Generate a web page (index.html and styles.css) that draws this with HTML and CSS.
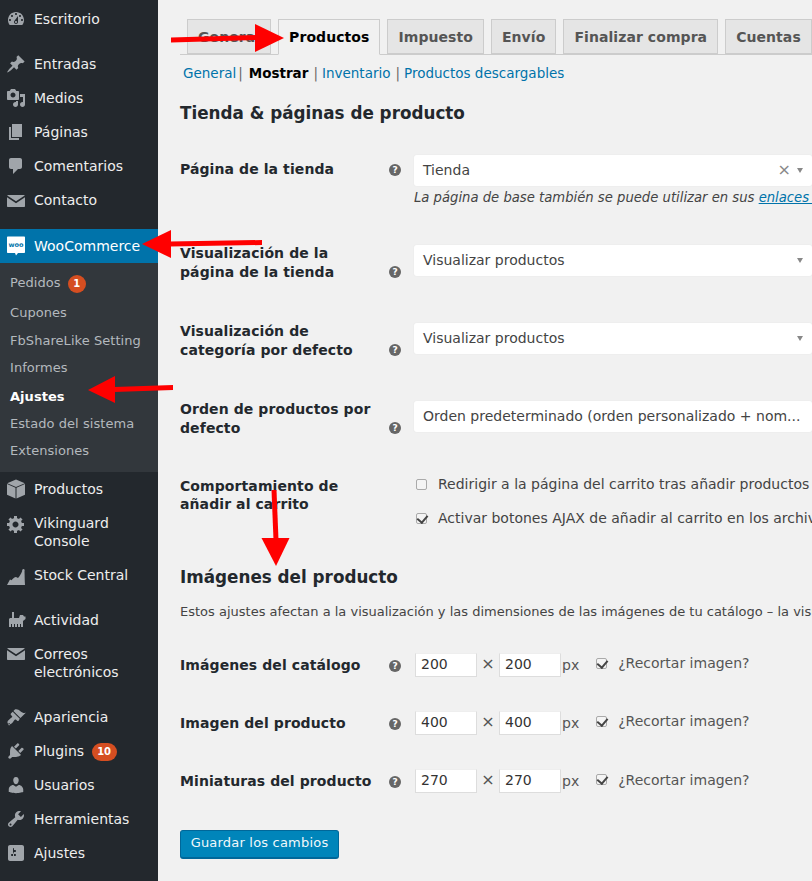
FILE: index.html
```html
<!DOCTYPE html>
<html lang="es">
<head>
<meta charset="utf-8">
<title>Ajustes de WooCommerce</title>
<link rel="stylesheet" href="styles.css">
</head>
<body>
<div class="page">
  <aside class="sidebar">
    <a class="item first"><svg class="ico" viewBox="0 0 20 20"><path d="M3.76 16h12.48c1.1-1.37 1.76-3.11 1.76-5 0-4.42-3.58-8-8-8s-8 3.58-8 8c0 1.89.66 3.63 1.76 5zM10 4c.55 0 1 .45 1 1s-.45 1-1 1-1-.45-1-1 .45-1 1-1zM6 6c.55 0 1 .45 1 1s-.45 1-1 1-1-.45-1-1 .45-1 1-1zm8 0c.55 0 1 .45 1 1s-.45 1-1 1-1-.45-1-1 .45-1 1-1zm-5.37 5.55L12 7v6c0 1.1-.9 2-2 2s-2-.9-2-2c0-.57.24-1.08.63-1.45zM4 10c.55 0 1 .45 1 1s-.45 1-1 1-1-.45-1-1 .45-1 1-1zm12 0c.55 0 1 .45 1 1s-.45 1-1 1-1-.45-1-1 .45-1 1-1zm-5 3c0-.55-.45-1-1-1s-1 .45-1 1 .45 1 1 1 1-.45 1-1z"/></svg><span>Escritorio</span></a>
    <div class="sep"></div>
    <a class="item"><svg class="ico" viewBox="0 0 20 20"><path d="M10.44 3.02l1.82-1.82 6.36 6.35-1.83 1.82c-1.05-.68-2.48-.57-3.41.36l-.75.75c-.92.93-1.04 2.35-.35 3.41l-1.83 1.82-2.41-2.41-2.8 2.79c-.42.42-3.38 2.71-3.8 2.29s1.86-3.39 2.28-3.81l2.79-2.79L4.1 9.36l1.83-1.82c1.05.69 2.48.57 3.4-.36l.75-.75c.93-.92 1.05-2.35.36-3.41z"/></svg><span>Entradas</span></a>
    <a class="item"><svg class="ico" viewBox="0 0 20 20"><path d="M13 11V4c0-.55-.45-1-1-1h-1.67L9 1H5L3.67 3H2c-.55 0-1 .45-1 1v7c0 .55.45 1 1 1h10c.55 0 1-.45 1-1zM7 4.5c1.38 0 2.5 1.12 2.5 2.5S8.38 9.5 7 9.5 4.5 8.38 4.5 7 5.62 4.5 7 4.5zM14 6h5v10.5c0 1.38-1.12 2.5-2.5 2.5S14 17.88 14 16.5s1.12-2.5 2.5-2.5c.17 0 .34.02.5.05V9h-3V6zm-4 8.05V13h2v3.5c0 1.38-1.12 2.5-2.5 2.5S7 17.88 7 16.5 8.12 14 9.5 14c.17 0 .34.02.5.05z"/></svg><span>Medios</span></a>
    <a class="item"><svg class="ico" viewBox="0 0 20 20"><path d="M6 15V2h10v13H6zm-1 1h8v2H3V5h2v11z"/></svg><span>Páginas</span></a>
    <a class="item"><svg class="ico" viewBox="0 0 20 20"><path d="M5 2h9c1.1 0 2 .9 2 2v7c0 1.1-.9 2-2 2h-2l-5 5v-5H5c-1.1 0-2-.9-2-2V4c0-1.1.9-2 2-2z"/></svg><span>Comentarios</span></a>
    <a class="item"><svg class="ico" viewBox="0 0 20 20"><path d="M2 5h16c.4 0 .7.2.8.5L10 11.300 1.200 5.500C1.300 5.200 1.600 5 2 5zM1 7.300l9 6 9-6V16c0 .6-.4 1-1 1H2c-.6 0-1-.4-1-1z"/></svg><span>Contacto</span></a>
    <div class="sep short"></div>
    <a class="item woo"><svg class="ico" viewBox="0 0 20 20"><path class="woo-bubble" d="M2 .4h16c.6 0 1 .4 1 1v14.600c0 .6-.4 1-1 1h-6l-2 2.500-1-2.500H2c-.6 0-1-.4-1-1V1.400c0-.6.4-1 1-1z"/><text class="woo-text" x="10" y="10.800" text-anchor="middle">woo</text></svg><span>WooCommerce</span></a>
    <div class="submenu">
      <a class="sub tall">Pedidos <b class="badge">1</b></a>
      <a class="sub">Cupones</a>
      <a class="sub">FbShareLike Setting</a>
      <a class="sub">Informes</a>
      <a class="sub current">Ajustes</a>
      <a class="sub">Estado del sistema</a>
      <a class="sub last">Extensiones</a>
    </div>
    <a class="item"><svg class="ico" viewBox="0 0 20 20"><path d="M10 .5l8.800 3.700L10 8 1.200 4.200zM1 5l8.500 3.800V19.500L1 15.800zM19 5V15.800L10.500 19.500V8.800z"/></svg><span>Productos</span></a>
    <a class="item two"><svg class="ico" viewBox="0 0 20 20"><path d="M18 12h-2.180c-.17.7-.44 1.350-.81 1.930l1.540 1.540-2.100 2.100-1.540-1.540c-.58.36-1.230.63-1.910.79V19H8v-2.180c-.68-.16-1.330-.43-1.910-.79l-1.540 1.540-2.120-2.120 1.540-1.540c-.36-.58-.63-1.230-.79-1.910H1V9.030h2.170c.16-.7.44-1.350.8-1.940L2.430 5.550l2.100-2.100 1.540 1.540c.58-.37 1.240-.64 1.930-.81V2h3v2.180c.68.16 1.330.43 1.910.79l1.540-1.540 2.120 2.120-1.540 1.540c.36.59.64 1.240.8 1.940H18V12zm-8.500 1.500c1.660 0 3-1.340 3-3s-1.340-3-3-3-3 1.340-3 3 1.340 3 3 3z"/></svg><span>Vikinguard<br>Console</span></a>
    <a class="item"><svg class="ico" viewBox="0 0 20 20"><path d="M1 20l3-5.500 1.500.8c1.500-2 3-3.300 4.500-3.300l2 1c1.500-1.500 3-4 4.200-7-.3-1 .3-2 1.300-2s1.500 1 1 2c.2 5 .2 10 .5 14z"/></svg><span>Stock Central</span></a>
    <div class="sep mid"></div>
    <a class="item"><svg class="ico" viewBox="0 0 20 20"><path d="M6 2h2v6h5l1-3h3l1 1.500h1.500V9L17 11v6h-2v-3h-1v3h-2v-3h-1v3H9v-3H8v3H6v-3H5v3H3V9l1-1h2z"/></svg><span>Actividad</span></a>
    <a class="item two"><svg class="ico" viewBox="0 0 20 20"><path d="M2 3h16c.4 0 .7.2.8.5L10 9.300 1.200 3.500C1.300 3.200 1.600 3 2 3zM1 5.300l9 6 9-6V14c0 .6-.4 1-1 1H2c-.6 0-1-.4-1-1z"/></svg><span>Correos<br>electrónicos</span></a>
    <div class="sep mid"></div>
    <a class="item"><svg class="ico" viewBox="0 0 20 20"><path d="M14.480 11.060L7.410 3.990l1.500-1.500c.5-.56 2.300-.47 3.510.32 1.210.8 1.430 1.280 2.910 2.100 1.180.64 2.450 1.260 4.450.85zm-.71.71L6.700 4.700 4.930 6.470c-.39.39-.39 1.020 0 1.410l1.060 1.060c.39.39.39 1.030 0 1.420-.6.6-1.430 1.110-2.210 1.690-.35.26-.7.53-1.010.84C1.430 13.710.96 15.650 1.970 16.660s2.950.54 4.210-.72c.31-.31.58-.66.84-1.010.58-.78 1.090-1.610 1.690-2.210.39-.39 1.030-.39 1.420 0l1.060 1.060c.39.39 1.020.39 1.410 0zm-9.900 6.130c-.39.39-1.030.39-1.420 0-.39-.39-.39-1.030 0-1.420s1.030-.39 1.420 0 .39 1.030 0 1.420z"/></svg><span>Apariencia</span></a>
    <a class="item"><svg class="ico" viewBox="0 0 20 20"><path d="M13.110 4.360L9.870 7.600 8 5.730l3.240-3.240c.35-.34 1.050-.2 1.560.32.52.51.66 1.210.31 1.550zm-8 1.770l.91-1.120 9.010 9.010-1.190.84c-.71.71-2.630 1.160-3.820 1.160H6.140L4.900 17.260c-.59.59-1.540.59-2.120 0-.59-.58-.59-1.530 0-2.120l1.240-1.240v-3.880c0-1.130.4-3.190 1.090-3.890zm7.260 3.970l3.240-3.240c.34-.35 1.040-.21 1.550.31.52.51.66 1.210.31 1.550l-3.240 3.250z"/></svg><span>Plugins <b class="badge wide">10</b></span></a>
    <a class="item"><svg class="ico" viewBox="0 0 20 20"><path d="M10 9.250c-2.270 0-2.730-3.440-2.730-3.440C7 4.020 7.820 2 9.970 2c2.160 0 2.980 2.020 2.710 3.810 0 0-.41 3.440-2.680 3.440zm0 2.570L12.720 10c2.390 0 4.520 2.330 4.520 4.530v2.490s-3.650 1.130-7.240 1.130c-3.650 0-7.240-1.130-7.240-1.130v-2.490c0-2.250 1.940-4.480 4.470-4.480z"/></svg><span>Usuarios</span></a>
    <a class="item"><svg class="ico" viewBox="0 0 20 20"><path d="M16.680 9.770c-1.340 1.340-3.300 1.670-4.950.99l-5.410 6.520c-.99.99-2.590.99-3.580 0s-.99-2.590 0-3.570l6.520-5.420c-.68-1.650-.35-3.610.99-4.950 1.280-1.280 3.120-1.620 4.720-1.060l-2.890 2.890 2.820 2.820 2.860-2.870c.53 1.580.18 3.390-1.080 4.670zM3.810 16.210c.4.39 1.040.39 1.430 0 .4-.4.4-1.040 0-1.430-.39-.4-1.030-.4-1.430 0-.39.39-.39 1.030 0 1.430z"/></svg><span>Herramientas</span></a>
    <a class="item"><svg class="ico" viewBox="0 0 20 20"><path d="M18 16V4c0-1.100-.9-2-2-2H4c-1.100 0-2 .9-2 2v12c0 1.100.9 2 2 2h12c1.100 0 2-.9 2-2zM8 11h1c.55 0 1 .45 1 1s-.45 1-1 1H8v1.500c0 .28-.22.5-.5.5s-.5-.22-.5-.5V13H6c-.55 0-1-.45-1-1s.45-1 1-1h1V5.500c0-.28.22-.5.5-.5s.5.22.5.5V7h1c.55 0 1 .45 1 1s-.45 1-1 1h-1v5.500c0 .28-.22.5-.5.5s-.5-.22-.5-.5V9z"/></svg><span>Ajustes</span></a>
  </aside>

  <main class="main">
    <nav class="tabs">
      <a class="tab">General</a>
      <a class="tab active">Productos</a>
      <a class="tab">Impuesto</a>
      <a class="tab">Envío</a>
      <a class="tab">Finalizar compra</a>
      <a class="tab">Cuentas</a>
    </nav>
    <div class="subnav">
      <a>General</a><span class="bar first-bar">|</span><strong>Mostrar</strong><span class="bar">|</span><a>Inventario</a><span class="bar">|</span><a>Productos descargables</a>
    </div>
    <h2 class="title t1">Tienda &amp; páginas de producto</h2>

    <div class="row r1">
      <div class="lab">Página de la tienda</div>
      <i class="help">?</i>
      <div class="field">
        <div class="select"><span class="val">Tienda</span><span class="x">×</span><span class="caret"></span></div>
        <p class="desc">La página de base también se puede utilizar en sus <a>enlaces permanentes de producto</a>.</p>
      </div>
    </div>
    <div class="row r2">
      <div class="lab">Visualización de la<br>página de la tienda</div>
      <i class="help low">?</i>
      <div class="field"><div class="select"><span class="val">Visualizar productos</span><span class="caret"></span></div></div>
    </div>
    <div class="row r3">
      <div class="lab">Visualización de<br>categoría por defecto</div>
      <i class="help low">?</i>
      <div class="field"><div class="select"><span class="val">Visualizar productos</span><span class="caret"></span></div></div>
    </div>
    <div class="row r3">
      <div class="lab">Orden de productos por<br>defecto</div>
      <i class="help low">?</i>
      <div class="field"><div class="select"><span class="val">Orden predeterminado (orden personalizado + nom...</span></div></div>
    </div>
    <div class="row r5">
      <div class="lab">Comportamiento de<br>añadir al carrito</div>
      <span class="nohelp"></span>
      <div class="field checks">
        <label class="check"><span class="cb"></span>Redirigir a la página del carrito tras añadir productos con éxito</label>
        <label class="check"><span class="cb on"></span>Activar botones AJAX de añadir al carrito en los archivos</label>
      </div>
    </div>

    <h2 class="title t2">Imágenes del producto</h2>
    <p class="intro">Estos ajustes afectan a la visualización y las dimensiones de las imágenes de tu catálogo – la visualización en la tienda</p>

    <div class="size s1">
      <div class="lab">Imágenes del catálogo</div>
      <i class="help">?</i>
      <div class="dims"><span class="num">200</span><span class="times">×</span><span class="num">200</span><span class="px">px</span><span class="cb on"></span><span class="crop">¿Recortar imagen?</span></div>
    </div>
    <div class="size">
      <div class="lab">Imagen del producto</div>
      <i class="help">?</i>
      <div class="dims"><span class="num">400</span><span class="times">×</span><span class="num">400</span><span class="px">px</span><span class="cb on"></span><span class="crop">¿Recortar imagen?</span></div>
    </div>
    <div class="size s3">
      <div class="lab">Miniaturas del producto</div>
      <i class="help">?</i>
      <div class="dims"><span class="num">270</span><span class="times">×</span><span class="num">270</span><span class="px">px</span><span class="cb on"></span><span class="crop">¿Recortar imagen?</span></div>
    </div>
    <button class="save" type="button">Guardar los cambios</button>
  </main>

  <svg class="arrows" viewBox="0 0 812 881" aria-hidden="true">
    <path d="M171 37.500L256 35v5l-85 2.500z"/><path d="M255 24l29 14-29 14z"/>
    <path d="M170 241.500L262 240v5l-92 1.500z"/><path d="M142 244l29-14v28z"/>
    <path d="M114 387l59-2v5l-59 2z"/><path d="M88 390l27-14v27z"/>
    <path d="M271.500 490h5l2 50h-5z"/><path d="M261.500 538h28l-13.500 28z"/>
  </svg>
</div>
</body>
</html>
```

FILE: styles.css
```css
* { box-sizing: border-box; }
html, body { margin: 0; padding: 0; height: 881px; overflow: hidden; }
body { background: #f1f1f1; color: #444; font-family: "DejaVu Sans", sans-serif; font-size: 14px; }
.page { position: relative; display: flex; width: 812px; height: 881px; overflow: hidden; }
a { text-decoration: none; }

/* Sidebar */
.sidebar { flex: 0 0 158px; width: 158px; height: 881px; background: #23282d; color: #eee; overflow: hidden; }
.item { display: flex; align-items: flex-start; height: 34px; padding: 7px 0 0 6px; line-height: 20px; color: #eee; white-space: nowrap; }
.item > span { margin-left: 8px; }
.item.first { margin-top: 2px; }
.item.two { height: 52px; padding-top: 8px; line-height: 18px; }
.ico { flex: 0 0 20px; width: 20px; height: 20px; fill: #a0a5aa; }
.sep { height: 11px; }
.sep.short { height: 12px; }
.sep.mid { height: 11px; }
.woo { background: #0073aa; color: #fff; }
.woo-bubble { fill: #fff; }
.woo-text { fill: #0073aa; font: 700 6.500px "DejaVu Sans", sans-serif; }
.submenu { height: 209px; background: #32373c; padding-top: 6px; }
.sub { display: block; height: 27.500px; line-height: 27.500px; padding-left: 10px; font-size: 13px; letter-spacing: .05px; color: #b4b9be; white-space: nowrap; }
.sub.tall { height: 30px; line-height: 28px; }
.sub.current { margin-top: 1px; color: #fff; font-weight: 700; }
.sub.last { margin-top: -1px; }
.badge { display: inline-block; min-width: 18px; height: 18px; padding: 0 5px; border-radius: 9px; background: #d54e21; color: #fff; font-size: 10px; line-height: 18px; text-align: center; vertical-align: middle; }
.badge.wide { min-width: 25px; margin-left: 3px; }
.sub .badge { margin-left: 3px; }

/* Main */
.main { flex: 1 1 auto; min-width: 0; padding-left: 22px; white-space: nowrap; }
.tabs { display: flex; gap: 7px; height: 55px; padding: 19px 0 0 7px; border-bottom: 1px solid #ccc; width: 632px; }
.tab { height: 35px; padding: 0 10px; border: 1px solid #ccc; background: #e5e5e5; color: #555; font-weight: 700; line-height: 34px; letter-spacing: .07px; }
.tab.active { height: 36px; background: #f1f1f1; border-bottom-color: #f1f1f1; color: #000; }
.subnav { display: flex; padding: 9px 0 0 3px; font-size: 13.500px; line-height: 18px; color: #666; }
.subnav a { color: #0073aa; }
.subnav strong { color: #000; }
.bar { margin: 0 4px 0 5px; }
.bar.first-bar { margin: 0 6px 0 2px; }
.title { margin: 0; font-size: 16.800px; line-height: 24px; color: #23282d; font-weight: 700; }
.t1 { margin-top: 19px; }
.t2 { margin-top: 36px; }
.row { display: grid; grid-template-columns: 209px 25px 1fr; }
.r1 { margin-top: 30px; height: 60px; }
.r2 { margin-top: 30px; }
.r3 { margin-top: 41px; }
.r5 { margin-top: 40px; }
.lab { margin-top: -1px; font-weight: 700; color: #23282d; line-height: 19px; letter-spacing: .09px; }
.r1 .lab { padding-top: 6px; }
.r5 .lab { line-height: 18px; }
.help { display: block; width: 12px; height: 12px; margin: 9px 0 0; border-radius: 50%; background: #666; color: #fff; font: 700 9px/12px "DejaVu Sans", sans-serif; text-align: center; }
.help.low { margin-top: 21px; }
.field { min-width: 0; }
.select { position: relative; display: flex; align-items: center; width: 398px; height: 31px; padding: 0 0 2px 9px; background: #fff; border-radius: 3px; box-shadow: 0 0 0 1px #eee; }
.val { color: #444; }
.x { position: absolute; right: 21px; top: 5px; color: #888; font-size: 16px; line-height: 20px; }
.caret { position: absolute; right: 9px; top: 13px; width: 0; height: 0; border: 3.500px solid transparent; border-top: 5px solid #888; border-bottom: 0; }
.desc { margin: 3px 0 0; font-style: italic; font-size: 13.200px; line-height: 18px; color: #444; }
.desc a { color: #0073aa; text-decoration: underline; }
.checks { padding-left: 2px; margin-top: -5px; }
.check { display: flex; align-items: center; height: 22px; }
.check + .check { margin-top: 12px; }
.cb { position: relative; flex: 0 0 11px; display: inline-block; width: 11px; height: 11px; margin-right: 11px; background: #f4f4f4; border: 1px solid #aaa; border-radius: 2px; }
.cb.on::after { content: ""; position: absolute; left: 2px; top: -1px; width: 5px; height: 8px; border: solid #444; border-width: 0 2px 2px 0; transform: rotate(40deg); }
.intro { margin: 13px 0 0; font-size: 13px; line-height: 20px; color: #444; }
.size { display: grid; grid-template-columns: 209px 26px 1fr; height: 24px; margin-top: 34px; align-items: center; }
.s1 { margin-top: 31px; }
.size .lab { margin-top: 0; }
.size .help { margin: 2px 0 0; }
.dims { display: flex; align-items: center; height: 24px; }
.num { width: 62px; height: 24px; padding-left: 5px; background: #fff; border: 1px solid #ddd; border-top-color: #eee; line-height: 20px; color: #333; }
.times { width: 22px; text-align: center; color: #555; font-size: 16px; line-height: 20px; margin-bottom: 2px; }
.px { margin: 0 17px 0 1px; color: #555; }
.crop { color: #555; margin-bottom: 4px; }
.s3 .crop { margin-bottom: 2px; }
.dims .cb { margin: 0 11px 4px 0; }
.save { display: block; width: 159px; height: 29px; margin-top: 37px; padding: 0 0 3px; border: 1px solid #006799; border-bottom-width: 2px; border-radius: 3px; background: #0085ba; color: #f0f8fb; font: 13px "DejaVu Sans", sans-serif; letter-spacing: .2px; }

/* Annotation arrows drawn over the screenshot */
.arrows { position: absolute; left: 0; top: 0; width: 812px; height: 881px; fill: #f00; pointer-events: none; }
```
